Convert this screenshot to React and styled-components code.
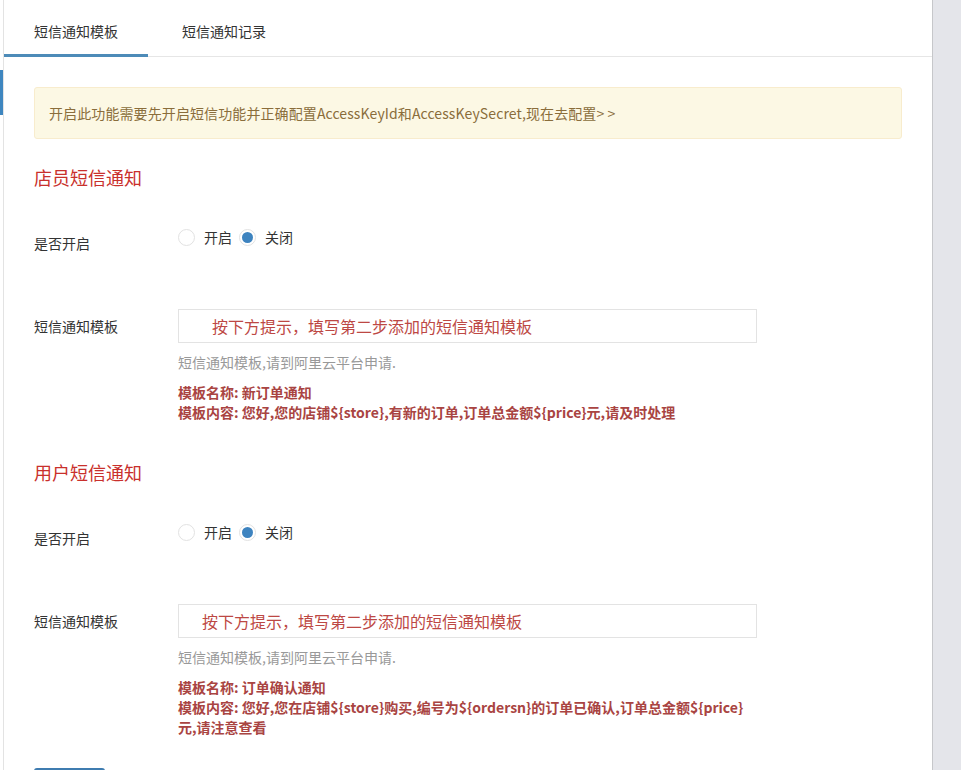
import React from 'react';
import styled, { createGlobalStyle } from 'styled-components';

const GlobalStyle = createGlobalStyle`
    html, body {
        margin: 0;
        padding: 0;
        background: #fff;
    }
    body {
        font-family: "Noto Sans CJK SC", "Noto Sans", sans-serif;
        font-size: 14px;
        color: #333;
    }
    * { box-sizing: border-box; }
`;

const sections = [
    {
        title: '店员短信通知',
        indent: 21,
        name: '新订单通知',
        content: '您好,您的店铺${store},有新的订单,订单总金额${price}元,请及时处理',
    },
    {
        title: '用户短信通知',
        indent: 11,
        name: '订单确认通知',
        content: '您好,您在店铺${store}购买,编号为${ordersn}的订单已确认,订单总金额${price}元,请注意查看',
    },
];

function Radio({ checked, children }) {
    return (
        <RadioLabel>
            <RadioDot $checked={checked} />
            {children}
        </RadioLabel>
    );
}

export default function App() {
    return (
        <Page>
            <GlobalStyle />
            <Side>
                <Marker />
            </Side>
            <Main>
                <Tabs>
                    <Tab $active>短信通知模板</Tab>
                    <Tab>短信通知记录</Tab>
                </Tabs>
                <Body>
                    <Alert>开启此功能需要先开启短信功能并正确配置AccessKeyId和AccessKeySecret,现在去配置&gt; &gt;</Alert>
                    {sections.map((s) => (
                        <Section key={s.title}>
                            <Title>{s.title}</Title>
                            <Row>
                                <Label $top={13}>是否开启</Label>
                                <Control>
                                    <Radios>
                                        <Radio>开启</Radio>
                                        <Radio checked>关闭</Radio>
                                    </Radios>
                                </Control>
                            </Row>
                            <Row $gap={56}>
                                <Label $top={7}>短信通知模板</Label>
                                <Control>
                                    <Input $indent={s.indent} placeholder="按下方提示，填写第二步添加的短信通知模板" />
                                    <Help>短信通知模板,请到阿里云平台申请.</Help>
                                    <Tip>
                                        模板名称: {s.name}
                                        <br />
                                        模板内容: {s.content}
                                    </Tip>
                                </Control>
                            </Row>
                        </Section>
                    ))}
                    <Actions>
                        <SaveButton>提交</SaveButton>
                    </Actions>
                </Body>
            </Main>
            <Scroll />
        </Page>
    );
}

const Page = styled.div`
    display: flex;
    min-height: 100vh;
`;

const Side = styled.div`
    width: 4px;
    border-right: 1px solid #e3e3e3;
    padding-top: 70px;
`;

const Marker = styled.div`
    width: 3px;
    height: 45px;
    background: #3e86bf;
`;

const Main = styled.div`
    flex: 1;
    min-width: 0;
`;

const Scroll = styled.div`
    width: 29px;
    background: #e4e5ea;
    border-left: 1px solid #c6c7ca;
`;

const Tabs = styled.div`
    display: flex;
    border-bottom: 1px solid #e6e6e6;
    height: 57px;
`;

const Tab = styled.div`
    height: 57px;
    padding: 21px 30px 0;
    margin-right: 4px;
    font-size: 14px;
    line-height: 20px;
    color: #333;
    border-bottom: 3px solid ${(p) => (p.$active ? '#4d8bb8' : 'transparent')};
    margin-bottom: -1px;
    cursor: pointer;
`;

const Body = styled.div`
    padding: 30px 30px 0;
`;

const Alert = styled.div`
    background: #fcf8e4;
    border: 1px solid #f8eccd;
    border-radius: 3px;
    color: #8a6d3b;
    font-size: 14px;
    line-height: 20px;
    letter-spacing: 0.1px;
    padding: 15px 14px;
`;

const Section = styled.div`
    margin-top: 27px;
    & + & {
        margin-top: 39px;
    }
`;

const Title = styled.div`
    font-size: 18px;
    line-height: 22px;
    color: #c9302c;
    margin-bottom: 32px;
`;

const Row = styled.div`
    display: flex;
    align-items: flex-start;
    margin-top: ${(p) => p.$gap || 0}px;
`;

const Label = styled.div`
    width: 144px;
    flex-shrink: 0;
    padding-top: ${(p) => p.$top}px;
    line-height: 20px;
    font-size: 14px;
    color: #333;
`;

const Control = styled.div`
    width: 580px;
`;

const Radios = styled.div`
    display: flex;
    gap: 7px;
    padding-top: 7px;
    line-height: 20px;
`;

const RadioLabel = styled.label`
    display: flex;
    align-items: center;
    gap: 9px;
    font-size: 14px;
    color: #333;
`;

const RadioDot = styled.span`
    width: 17px;
    height: 17px;
    border-radius: 50%;
    border: 1px solid #e2e2e2;
    background: #fff;
    display: inline-flex;
    align-items: center;
    justify-content: center;
    &::after {
        content: '';
        width: 11px;
        height: 11px;
        border-radius: 50%;
        background: ${(p) => (p.$checked ? '#3d83bf' : 'transparent')};
    }
`;

const Input = styled.input`
    display: block;
    width: 579px;
    height: 34px;
    border: 1px solid #e3e3e3;
    padding: 6px 12px;
    font-family: inherit;
    font-size: 16px;
    text-indent: ${(p) => p.$indent}px;
    outline: none;
    &::placeholder {
        color: #bd4844;
    }
`;

const Help = styled.div`
    margin-top: 9px;
    font-size: 14px;
    line-height: 20px;
    color: #999;
`;

const Tip = styled.div`
    width: 570px;
    margin-top: 10px;
    font-size: 14px;
    line-height: 20px;
    font-weight: bold;
    color: #a94442;
`;

const Actions = styled.div`
    margin-top: 31px;
`;

const SaveButton = styled.button`
    width: 71px;
    height: 34px;
    border: none;
    border-radius: 3px;
    background: #3f7cb0;
    color: #fff;
    font-family: inherit;
    font-size: 14px;
`;
